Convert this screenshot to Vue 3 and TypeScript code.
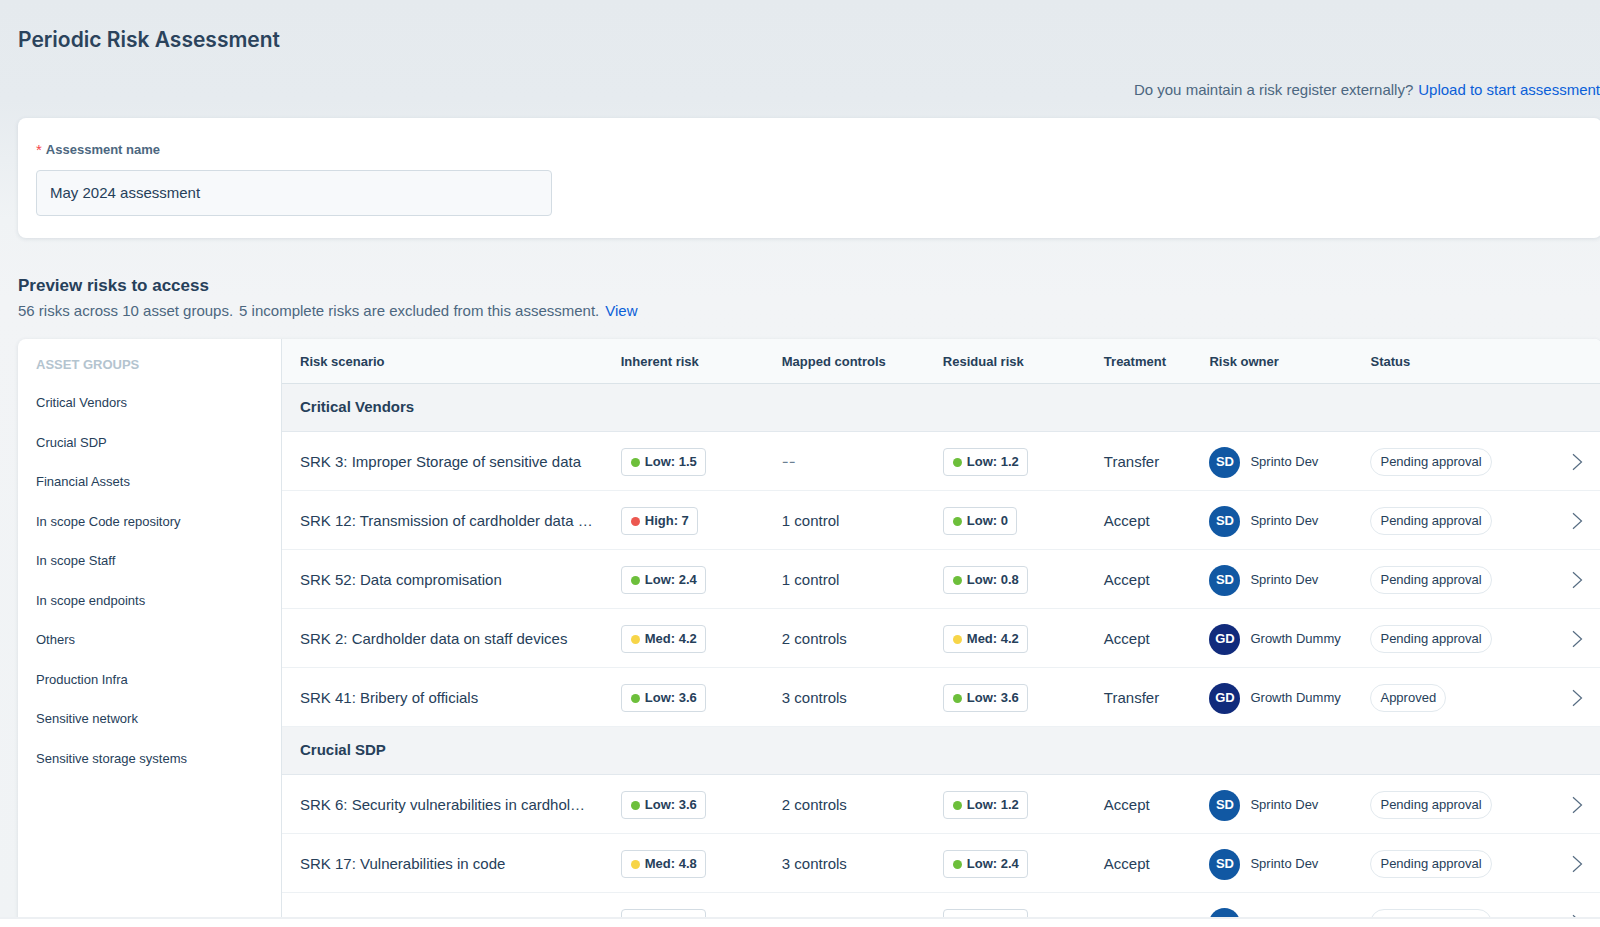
<script setup lang="ts">
import { ref } from 'vue'

type Level = 'Low' | 'Med' | 'High'
type Owner = 'Sprinto Dev' | 'Growth Dummy'

interface Risk {
  name: string
  inherent: [Level, string]
  controls: number
  residual: [Level, string]
  treatment: string
  owner: Owner
  status: string
}

interface RiskGroup {
  name: string
  risks: Risk[]
}

const assessmentName = ref('May 2024 assessment')

const assetGroups: string[] = [
  'Critical Vendors',
  'Crucial SDP',
  'Financial Assets',
  'In scope Code repository',
  'In scope Staff',
  'In scope endpoints',
  'Others',
  'Production Infra',
  'Sensitive network',
  'Sensitive storage systems',
]

const columns: string[] = [
  'Risk scenario',
  'Inherent risk',
  'Mapped controls',
  'Residual risk',
  'Treatment',
  'Risk owner',
  'Status',
]

const groups: RiskGroup[] = [
  {
    name: 'Critical Vendors',
    risks: [
      { name: 'SRK 3: Improper Storage of sensitive data', inherent: ['Low', '1.5'], controls: 0, residual: ['Low', '1.2'], treatment: 'Transfer', owner: 'Sprinto Dev', status: 'Pending approval' },
      { name: 'SRK 12: Transmission of cardholder data …', inherent: ['High', '7'], controls: 1, residual: ['Low', '0'], treatment: 'Accept', owner: 'Sprinto Dev', status: 'Pending approval' },
      { name: 'SRK 52: Data compromisation', inherent: ['Low', '2.4'], controls: 1, residual: ['Low', '0.8'], treatment: 'Accept', owner: 'Sprinto Dev', status: 'Pending approval' },
      { name: 'SRK 2: Cardholder data on staff devices', inherent: ['Med', '4.2'], controls: 2, residual: ['Med', '4.2'], treatment: 'Accept', owner: 'Growth Dummy', status: 'Pending approval' },
      { name: 'SRK 41: Bribery of officials', inherent: ['Low', '3.6'], controls: 3, residual: ['Low', '3.6'], treatment: 'Transfer', owner: 'Growth Dummy', status: 'Approved' },
    ],
  },
  {
    name: 'Crucial SDP',
    risks: [
      { name: 'SRK 6: Security vulnerabilities in cardhol…', inherent: ['Low', '3.6'], controls: 2, residual: ['Low', '1.2'], treatment: 'Accept', owner: 'Sprinto Dev', status: 'Pending approval' },
      { name: 'SRK 17: Vulnerabilities in code', inherent: ['Med', '4.8'], controls: 3, residual: ['Low', '2.4'], treatment: 'Accept', owner: 'Sprinto Dev', status: 'Pending approval' },
      { name: 'SRK 18', inherent: ['Med', '4.8'], controls: 3, residual: ['Low', '2.4'], treatment: 'Accept', owner: 'Sprinto Dev', status: 'Pending approval' },
    ],
  },
]

const initials = (owner: Owner): string => owner.split(' ').map((w) => w[0]).join('')
const controlText = (n: number): string => (n === 0 ? '--' : n === 1 ? '1 control' : `${n} controls`)
</script>

<template>
  <main class="page">
    <h1>Periodic Risk Assessment</h1>
    <p class="upload">
      <span>Do you maintain a risk register externally?</span>
      <a href="#upload">Upload to start assessment</a>
    </p>

    <section class="card">
      <label for="assessment-name"><span class="required">*</span>Assessment name</label>
      <input id="assessment-name" v-model="assessmentName" type="text" />
    </section>

    <h2>Preview risks to access</h2>
    <p class="summary">
      <span>56 risks across 10 asset groups.</span>
      <span>5 incomplete risks are excluded from this assessment.</span>
      <a href="#excluded">View</a>
    </p>

    <section class="panel">
      <nav class="groups" aria-labelledby="groups-title">
        <h3 id="groups-title">ASSET GROUPS</h3>
        <ul>
          <li v-for="group in assetGroups" :key="group">
            <a href="#risks">{{ group }}</a>
          </li>
        </ul>
      </nav>

      <table id="risks">
        <colgroup>
          <col class="w-scenario" />
          <col class="w-mid" />
          <col class="w-mid" />
          <col class="w-mid" />
          <col class="w-treatment" />
          <col class="w-mid" />
          <col class="w-mid" />
          <col />
        </colgroup>
        <thead>
          <tr>
            <th v-for="column in columns" :key="column" scope="col">{{ column }}</th>
            <td></td>
          </tr>
        </thead>
        <tbody v-for="group in groups" :key="group.name">
          <tr class="group-row">
            <th colspan="8" scope="rowgroup">{{ group.name }}</th>
          </tr>
          <tr v-for="risk in group.risks" :key="risk.name" class="risk-row">
            <td class="scenario">{{ risk.name }}</td>
            <td>
              <span class="badge">
                <span class="dot" :class="risk.inherent[0].toLowerCase()"></span>{{ risk.inherent[0] }}: {{ risk.inherent[1] }}
              </span>
            </td>
            <td :class="{ none: risk.controls === 0 }">{{ controlText(risk.controls) }}</td>
            <td>
              <span class="badge">
                <span class="dot" :class="risk.residual[0].toLowerCase()"></span>{{ risk.residual[0] }}: {{ risk.residual[1] }}
              </span>
            </td>
            <td>{{ risk.treatment }}</td>
            <td>
              <span class="owner">
                <span class="avatar" :class="initials(risk.owner).toLowerCase()">{{ initials(risk.owner) }}</span>
                {{ risk.owner }}
              </span>
            </td>
            <td><span class="pill">{{ risk.status }}</span></td>
            <td class="action">
              <button type="button" :aria-label="`Open ${risk.name}`">
                <svg width="12" height="20" viewBox="0 0 12 20" fill="none">
                  <path d="M2 2.2 10.5 10 2 17.8" stroke="#566c82" stroke-width="1.2" />
                </svg>
              </button>
            </td>
          </tr>
        </tbody>
      </table>
    </section>
  </main>
</template>

<style>
body {
  margin: 0;
  background: #fff;
}
</style>

<style scoped>
.page {
  box-sizing: border-box;
  height: calc(100vh - 8px);
  overflow: hidden;
  padding: 24px 0 0 18px;
  border-bottom: 2px solid #edf0f3;
  background: linear-gradient(#e5eaee 0, #e6ebef 100px, #f0f3f5 220px, #f2f4f6 300px, #f0f3f5 100%);
  color: #26405a;
  font: 15px/20px "Liberation Sans", Arial, sans-serif;
}

h1,
h2,
h3,
p,
ul {
  margin: 0;
}

a {
  color: #0b5fd8;
  text-decoration: none;
}

h1 {
  color: #2b435c;
  font: 600 21px/32px Inter, sans-serif;
}

.upload {
  display: flex;
  gap: 5px;
  justify-content: flex-end;
  margin: 24px 0 18px;
  color: #4c6780;
  white-space: nowrap;
}

.card,
.panel {
  margin-right: -2px;
  border-radius: 8px;
  background: #fff;
  box-shadow: 0 1px 4px rgba(38, 64, 90, 0.12);
}

.card {
  display: flex;
  flex-direction: column;
  padding: 22px 18px;
}

.card label {
  display: flex;
  gap: 4px;
  margin-bottom: 10px;
  color: #4c6780;
  font-size: 13px;
  font-weight: 600;
}

.required {
  color: #f5474b;
  font-size: 15px;
  font-weight: 400;
}

.card input {
  box-sizing: border-box;
  width: calc(100% / 3);
  height: 46px;
  padding: 0 13px 2px;
  border: 1px solid #d3dce3;
  border-radius: 4px;
  background: #f7f9fb;
  color: #26405a;
  font: inherit;
}

h2 {
  margin-top: 36px;
  font-size: 17px;
  line-height: 24px;
}

.summary {
  display: flex;
  gap: 6px;
  margin: 3px 0 18px;
  color: #4c6780;
}

.panel {
  display: flex;
  align-items: stretch;
}

.groups {
  flex: none;
  box-sizing: border-box;
  width: 264px;
  padding: 16px 18px;
  border-right: 1px solid #dfe6eb;
}

.groups h3 {
  margin-bottom: 18px;
  color: #b4c4cf;
  font-size: 13px;
  line-height: 20px;
}

.groups ul {
  display: grid;
  gap: 20px;
  padding: 0;
  list-style: none;
  font-size: 13px;
  line-height: 1.5;
}

.groups a {
  color: #26405a;
}

table {
  flex: 1;
  width: 100%;
  table-layout: fixed;
  border-collapse: separate;
  border-spacing: 0;
}

.w-scenario {
  width: 24.3%;
}

.w-mid {
  width: 12.2%;
}

.w-treatment {
  width: 8%;
}

th,
td {
  box-sizing: border-box;
  padding: 0 0 0 18px;
  text-align: left;
  vertical-align: middle;
  white-space: nowrap;
}

thead th,
thead td {
  height: 45px;
  padding-top: 2px;
  border-bottom: 1px solid #dbe3e8;
  background: #f8fafb;
  font-size: 13px;
}

thead td {
  border-top-right-radius: 8px;
}

.group-row th {
  height: 48px;
  padding-bottom: 2px;
  border-bottom: 1px solid #e2e8ed;
  background: #f2f4f6;
  font-size: 15px;
}

.risk-row td {
  height: 59px;
  padding-top: 2px;
  border-bottom: 1px solid #edf1f4;
}

.scenario {
  overflow: hidden;
  text-overflow: ellipsis;
}

.none {
  color: #6b7f92;
  font-family: Inter, sans-serif;
}

.badge {
  display: inline-flex;
  align-items: center;
  gap: 5px;
  box-sizing: border-box;
  height: 28px;
  padding: 0 8px 0 9px;
  border: 1px solid #d3dce3;
  border-radius: 4px;
  font-size: 13px;
  font-weight: 600;
  vertical-align: middle;
}

.dot {
  width: 9px;
  height: 9px;
  border-radius: 50%;
}

.dot.low {
  background: #6dbf3b;
}

.dot.med {
  background: #f7d548;
}

.dot.high {
  background: #ec5850;
}

.owner {
  display: flex;
  align-items: center;
  gap: 10px;
  font-size: 13px;
}

.avatar {
  display: grid;
  place-items: center;
  width: 31px;
  height: 31px;
  border-radius: 50%;
  color: #fff;
  font-weight: 600;
}

.avatar.sd {
  background: #1158a3;
}

.avatar.gd {
  background: #112b7c;
}

.pill {
  display: inline-flex;
  align-items: center;
  box-sizing: border-box;
  height: 28px;
  padding: 0 9px;
  border: 1px solid #e2e9ee;
  border-radius: 14px;
  font-size: 13px;
  vertical-align: middle;
}

.risk-row .action {
  padding-top: 0;
  padding-right: 19px;
  text-align: right;
}

.action button {
  display: inline-flex;
  padding: 0;
  border: 0;
  background: none;
  vertical-align: middle;
}
</style>
